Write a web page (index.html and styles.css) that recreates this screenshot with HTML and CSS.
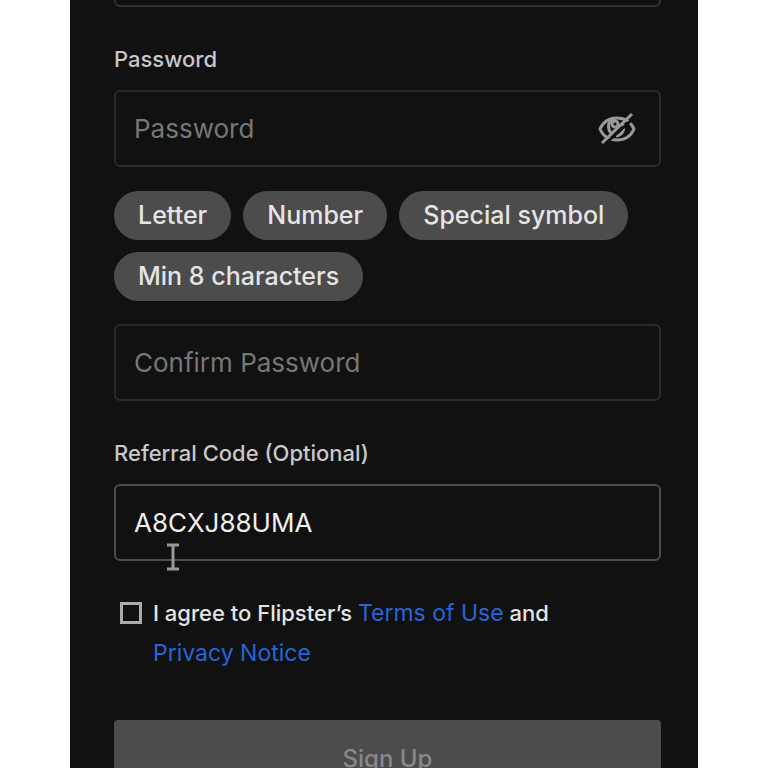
FILE: index.html
```html
<!DOCTYPE html>
<html lang="en">
  <head>
    <meta charset="utf-8" />
    <title>Sign Up</title>
    <meta name="viewport" content="width=device-width, initial-scale=1.0" />
    <link rel="stylesheet" href="styles.css">
  </head>
  <body>
    <main class="panel">
      <form class="signup-form">
        <input class="text-input email-input" type="email" aria-label="Email" />

        <label class="field-label" for="password">Password</label>
        <div class="input-wrap">
          <input class="text-input" type="password" id="password" placeholder="Password" />
          <button class="eye-button" type="button" aria-label="Show password">
            <svg width="38" height="32" viewBox="0 0 38 32" fill="none" stroke="currentColor" stroke-width="3">
              <path d="M2 16C5 9 11 5 19 5s14 4 17 11c-3 7-9 11-17 11S5 23 2 16z" />
              <path d="M13 20c-4-5-3-12 2-14M25 11c2 6-1 11-7 12" />
              <circle cx="17" cy="11" r="3" />
              <path d="M7 31L37 4" stroke="#111" stroke-width="3" />
              <path d="M4 30L34 1" />
            </svg>
          </button>
        </div>

        <ul class="rules">
          <li>Letter</li>
          <li>Number</li>
          <li>Special symbol</li>
          <li>Min 8 characters</li>
        </ul>

        <input class="text-input" type="password" placeholder="Confirm Password" aria-label="Confirm Password" />

        <label class="field-label" for="referral">Referral Code (Optional)</label>
        <div class="input-wrap">
          <input class="text-input referral-input" type="text" id="referral" value="A8CXJ88UMA" />
          <svg class="text-cursor" width="14" height="28" viewBox="0 0 14 28" fill="none" stroke="currentColor" stroke-width="3">
            <path d="M1 2h12M7 2v24M1 26h12" />
          </svg>
        </div>

        <div class="agree">
          <input type="checkbox" id="agree" />
          <label for="agree">I agree to Flipster’s <a href="#terms">Terms of Use</a> and <a href="#privacy">Privacy Notice</a></label>
        </div>

        <button class="submit-button" type="submit" disabled>Sign Up</button>
      </form>
    </main>
  </body>
</html>
```

FILE: styles.css
```css
* {
  box-sizing: border-box;
}

body {
  margin: 0;
  height: 100vh;
  overflow: hidden;
  background-color: #fff;
  font-family: Inter, "Liberation Sans", sans-serif;
  font-size: 22px;
  color: #e4e4e4;
}

.panel {
  height: 100%;
  margin: 0 70px;
  padding: 0 37px 0 44px;
  background-color: #111;
  overflow: hidden;
}

.signup-form {
  display: flex;
  flex-direction: column;
}

.text-input {
  display: block;
  width: 100%;
  height: 77px;
  padding: 0 18px;
  border: 2px solid #2b2b2b;
  border-radius: 6px;
  background-color: #111;
  color: #eee;
  font-family: inherit;
  font-size: 26px;
}

.text-input::placeholder {
  color: #777;
  opacity: 1;
}

/* The form is scrolled, only the bottom edge of this field shows */
.email-input {
  margin-top: -70px;
  border-color: #333;
}

.field-label {
  margin: 37px 0 16px;
  font-weight: 500;
  line-height: 30px;
  color: #c8c8c8;
}

.input-wrap {
  position: relative;
}

.eye-button {
  position: absolute;
  top: 0;
  right: 25px;
  height: 100%;
  padding: 0;
  border: none;
  background: none;
  color: #999;
}

.eye-button svg {
  display: block;
}

.rules {
  display: flex;
  flex-wrap: wrap;
  gap: 12px;
  margin: 24px 0 23px;
  padding: 0;
  list-style: none;
  font-size: 25px;
  font-weight: 500;
}

.rules li {
  padding: 0 24px;
  border-radius: 25px;
  background-color: #4c4c4c;
  line-height: 49px;
}

.referral-input {
  border-color: #4c4c4c;
}

.text-cursor {
  position: absolute;
  left: 52px;
  top: 59px;
  color: #999;
}

.agree {
  display: flex;
  align-items: flex-start;
  gap: 11px;
  margin: 32px 0 47px;
  padding-left: 6px;
  font-weight: 500;
  line-height: 40px;
}

.agree label {
  max-width: 420px;
}

.agree input {
  appearance: none;
  flex: none;
  width: 22px;
  height: 22px;
  margin: 9px 0;
  border: 3px solid #aaa;
}

.agree a {
  color: #2865d8;
  font-size: 23px;
  font-weight: 400;
  text-decoration: none;
}

.submit-button {
  height: 77px;
  border: none;
  border-radius: 4px;
  background-color: #4c4c4c;
  color: #888;
  font-family: inherit;
  font-size: 24px;
  font-weight: 500;
}
```
